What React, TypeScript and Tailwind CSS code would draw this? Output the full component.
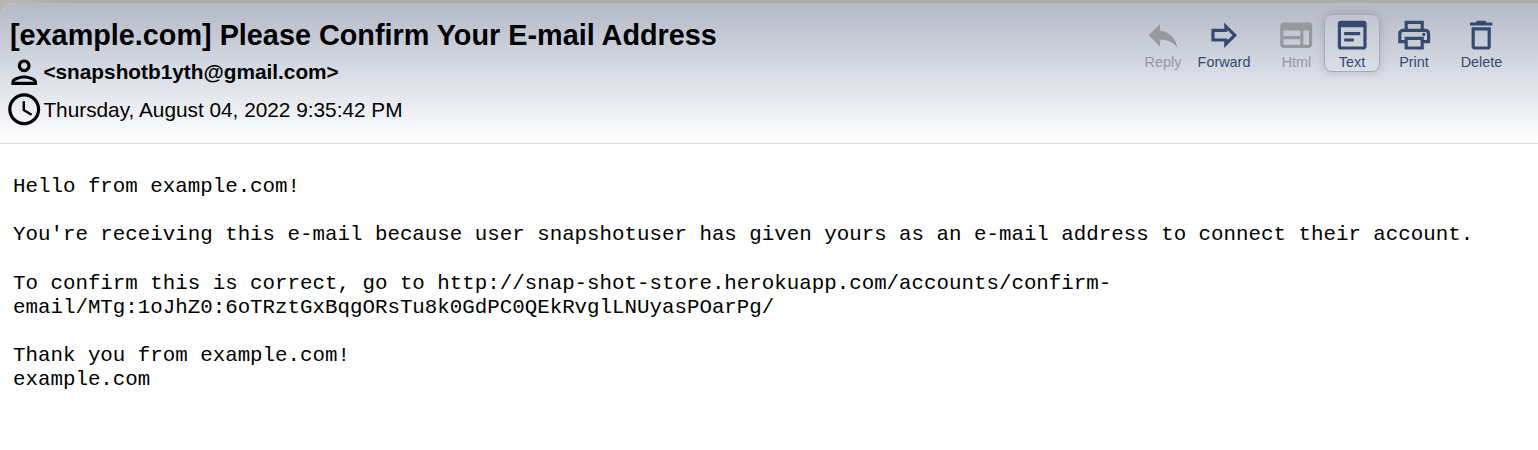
import {
  MdAccessTime,
  MdDeleteOutline,
  MdOutlineForward,
  MdOutlinePrint,
  MdReply,
  MdWysiwyg,
} from "react-icons/md";
import type { ComponentType } from "react";

type IconProps = { className?: string };

function PersonIcon({ className }: IconProps) {
  return (
    <svg viewBox="0 0 24 24" fill="currentColor" className={className}>
      <path d="M12 6c1.1 0 2 .9 2 2s-.9 2-2 2-2-.9-2-2 .9-2 2-2m0 10c2.7 0 5.8 1.29 6 2H6c.23-.72 3.31-2 6-2m0-12C9.79 4 8 5.79 8 8s1.79 4 4 4 4-1.79 4-4-1.79-4-4-4zm0 10c-2.67 0-8 1.34-8 4v2h16v-2c0-2.66-5.33-4-8-4z" />
    </svg>
  );
}

function HtmlIcon({ className }: IconProps) {
  return (
    <svg viewBox="0 0 24 24" fill="currentColor" className={className}>
      <path d="M20 4H4c-1.1 0-1.99.9-1.99 2L2 18c0 1.1.9 2 2 2h16c1.1 0 2-.9 2-2V6c0-1.1-.9-2-2-2zM4 9h10.5v3.5H4V9zm0 5.5h10.5V18H4v-3.5zM20 18h-3.5V9H20v9z" />
    </svg>
  );
}

type Action = {
  label: string;
  icon: ComponentType<IconProps>;
  width: string;
  disabled?: boolean;
  active?: boolean;
};

const actions: Action[] = [
  { label: "Reply", icon: MdReply, width: "w-[54px]", disabled: true },
  { label: "Forward", icon: MdOutlineForward, width: "ml-[3px] w-[62px]" },
  { label: "Html", icon: HtmlIcon, width: "ml-[14px] w-[55px]", disabled: true },
  { label: "Text", icon: MdWysiwyg, width: "w-[56px]", active: true },
  { label: "Print", icon: MdOutlinePrint, width: "ml-[6px] w-[56px]" },
  { label: "Delete", icon: MdDeleteOutline, width: "ml-[9px] w-[61px]" },
];

function ActionButton({ label, icon: Icon, width, disabled, active }: Action) {
  const tone = disabled ? "text-[#96999f]" : "text-[#364a70]";
  const frame = active
    ? "border-[#a8abb3] shadow-[0_0_10px_rgba(0,0,0,0.16)] bg-white/10"
    : "border-transparent";
  return (
    <button
      disabled={disabled}
      className={`flex h-[58px] shrink-0 flex-col items-center rounded-[8px] border ${width} ${tone} ${frame}`}
    >
      <Icon className="mt-px size-[38.4px] shrink-0" />
      <span className="-mt-px text-[14.4px] leading-[18px]">{label}</span>
    </button>
  );
}

export default function App() {
  return (
    <div className="h-[450px] overflow-hidden bg-linear-to-r from-[#b7b7b7] via-[#aaaca9] via-5% to-[#aaaca9] pt-[3px] font-['Liberation_Sans',Arial,sans-serif] text-black">
      <div className="h-full rounded-tl-[16px] bg-white">
        <header className="flex h-[141px] items-start justify-between rounded-tl-[16px] border-b border-[#dcdcdc] bg-linear-to-b from-[#b5b9c7] via-[#d8dce5] via-50% to-white">
          <div className="pl-[5px] pt-[13px]">
            <h1 className="pl-[5px] text-[28.8px] leading-[38px] font-bold whitespace-nowrap">
              [example.com] Please Confirm Your E-mail Address
            </h1>
            <div className="flex h-[36px] items-center text-[20.8px] font-bold">
              <PersonIcon className="size-[38.4px] shrink-0" />
              <span>&lt;snapshotb1yth@gmail.com&gt;</span>
            </div>
            <div className="flex h-[39px] items-center text-[20.8px]">
              <MdAccessTime className="size-[38.4px] shrink-0" />
              <span>Thursday, August 04, 2022 9:35:42 PM</span>
            </div>
          </div>
          <nav className="flex pt-[11px] pr-[26px]">
            {actions.map((action) => (
              <ActionButton key={action.label} {...action} />
            ))}
          </nav>
        </header>
        <pre className="pt-[31px] pl-[13px] font-['Liberation_Mono','Courier_New',monospace] text-[20.8px] leading-[24.15px]">
          {`Hello from example.com!

You're receiving this e-mail because user snapshotuser has given yours as an e-mail address to connect their account.

To confirm this is correct, go to http://snap-shot-store.herokuapp.com/accounts/confirm-
email/MTg:1oJhZ0:6oTRztGxBqgORsTu8k0GdPC0QEkRvglLNUyasPOarPg/

Thank you from example.com!
example.com`}
        </pre>
      </div>
    </div>
  );
}
